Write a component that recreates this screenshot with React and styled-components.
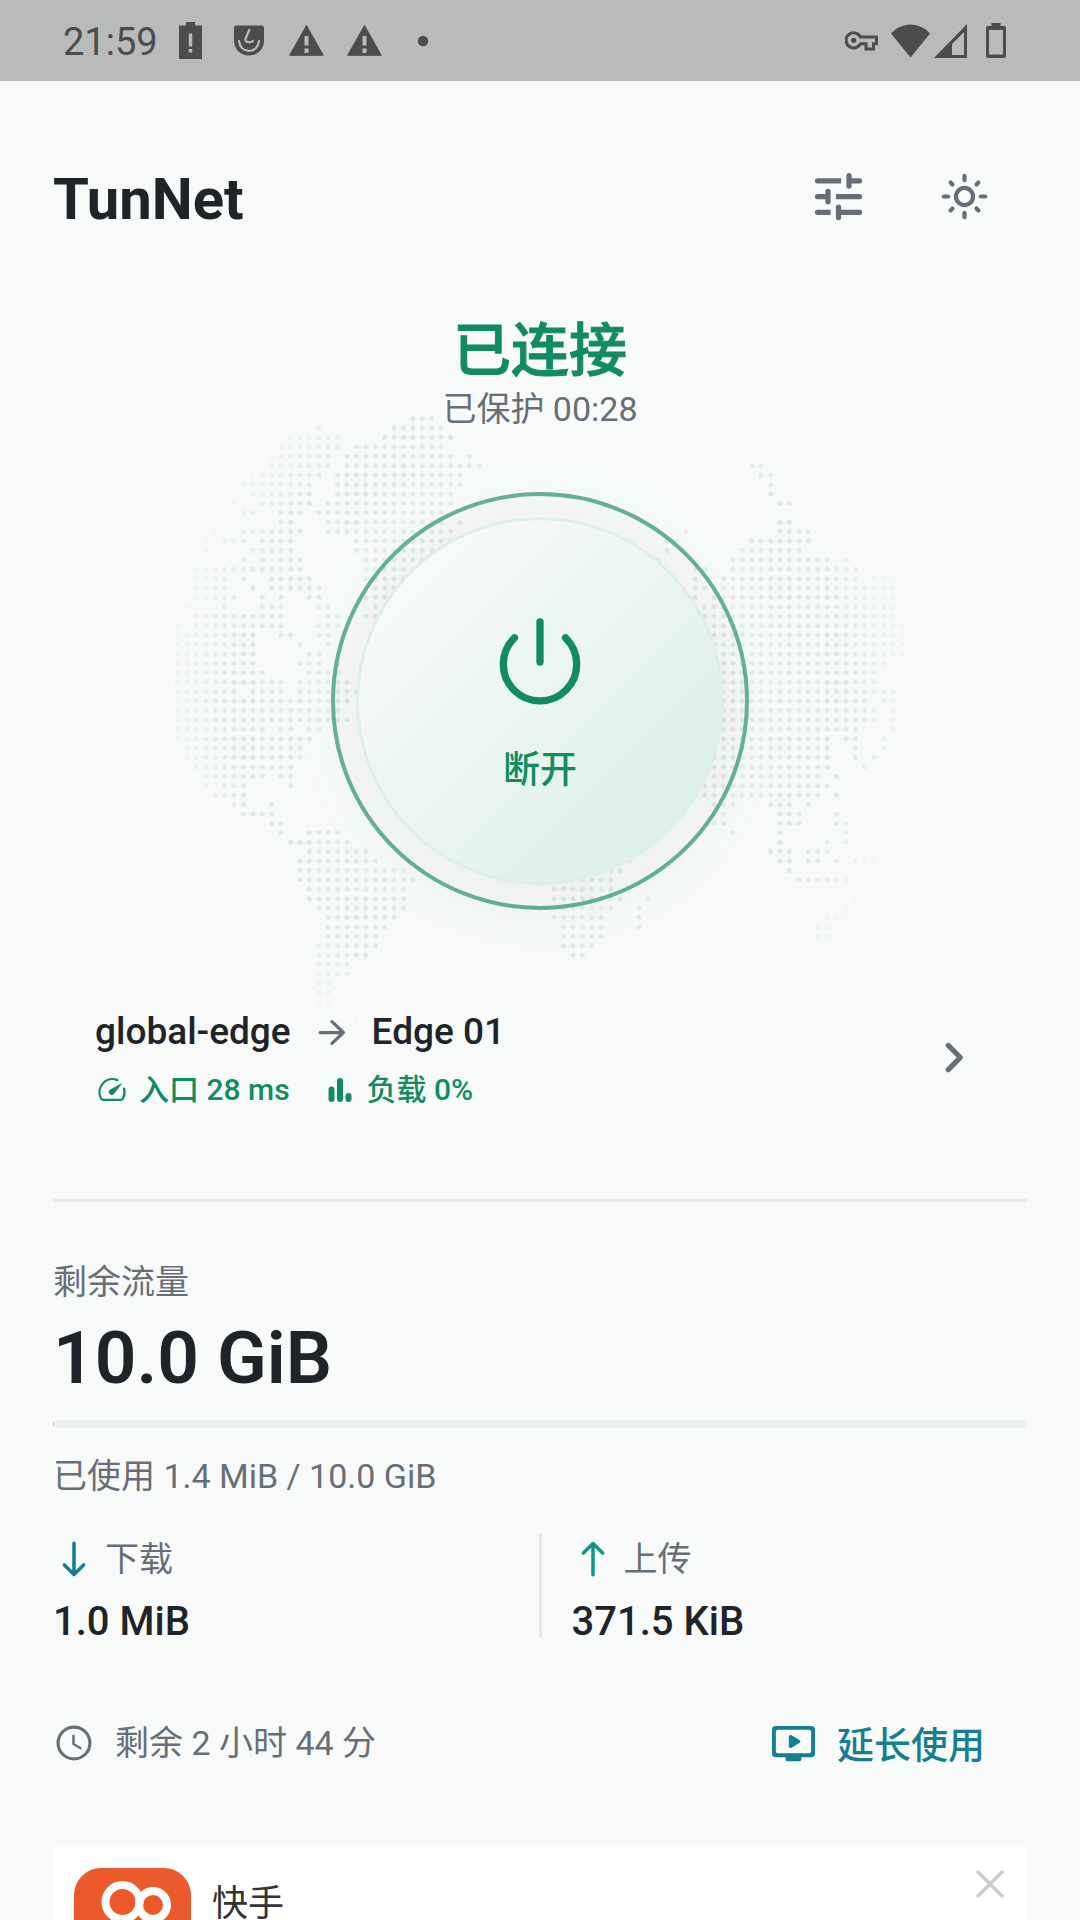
import React from "react";
import styled, { createGlobalStyle, css } from "styled-components";

const color = {
  page: "#f8faf9",
  ink: "#202428",
  muted: "#666e78",
  green: "#118c60",
  teal: "#157f8f",
  upload: "#0f9688",
  rule: "#e6e8ea",
  status: "#b9bbba",
  statusInk: "#4b4d4c",
};

const GlobalStyle = createGlobalStyle`
  *, *::before, *::after { box-sizing: border-box; }
  body {
    margin: 0;
    background: ${color.page};
    color: ${color.ink};
    font-family: Roboto, "Noto Sans CJK SC", sans-serif;
  }
  h1, h2, p, dl, dt, dd { margin: 0; font-weight: inherit; }
`;

const plainButton = css`
  margin: 0;
  padding: 0;
  border: 0;
  background: none;
  color: inherit;
  font: inherit;
  cursor: pointer;
`;

const Screen = styled.div`
  display: flex;
  flex-direction: column;
  height: 100vh;
  overflow: hidden;
`;

const StatusBar = styled.div`
  display: flex;
  flex: none;
  align-items: center;
  justify-content: space-between;
  height: 81px;
  padding: 0 73px 0 63px;
  background: ${color.status};
  color: ${color.statusInk};
`;

const StatusGroup = styled.div`
  display: flex;
  align-items: center;
  gap: ${(p) => p.$gap}px;
`;

const Slot = styled.span`
  display: grid;
  place-items: center;
  width: 42px;
`;

const Clock = styled.time`
  padding-top: 3px;
  font-size: 38px;
  line-height: 44px;
`;

const Icon = styled.svg`
  display: block;
  flex: none;
  width: ${(p) => p.$w}px;
  height: ${(p) => p.$h || p.$w}px;
  color: ${(p) => p.$color || "inherit"};
`;

const Content = styled.main`
  display: flex;
  flex: 1;
  flex-direction: column;
  min-height: 0;
  padding: 52px 53px 0;
`;

const Header = styled.header`
  display: flex;
  flex: none;
  align-items: center;
  justify-content: space-between;
  height: 126px;
`;

const AppName = styled.h1`
  padding-top: 5px;
  font-size: 58px;
  font-weight: 700;
  line-height: 68px;
`;

const Actions = styled.div`
  display: flex;
  color: ${color.muted};
`;

const IconButton = styled.button`
  ${plainButton}
  display: grid;
  place-items: center;
  width: 126px;
  height: 126px;
`;

const Hero = styled.section`
  display: flex;
  flex: none;
  flex-direction: column;
  align-items: center;
  padding-top: 57px;
`;

const State = styled.h2`
  position: relative;
  z-index: 1;
  color: ${color.green};
  font-size: 58px;
  font-weight: 500;
  line-height: 70px;
  -webkit-text-stroke: 1px ${color.green};
`;

const Elapsed = styled.p`
  position: relative;
  z-index: 1;
  color: ${color.muted};
  font-size: 34px;
  line-height: 46px;
`;

const Stage = styled.div`
  position: relative;
  display: grid;
  place-items: center;
  margin-top: 60px;
`;

const WorldMap = styled.svg`
  position: absolute;
  top: 50%;
  left: 50%;
  width: 800px;
  height: 700px;
  transform: translate(-50%, -50%);
  pointer-events: none;
`;

const PowerRing = styled.div`
  position: relative;
  padding: 21px;
  border: 4px solid #64b497;
  border-radius: 50%;
  box-shadow: 0 0 50px 30px rgba(244, 255, 251, 0.3);
`;

const PowerButton = styled.button`
  ${plainButton}
  display: flex;
  flex-direction: column;
  align-items: center;
  width: 368px;
  height: 368px;
  padding-top: 97px;
  border: 3px solid #dcefe8;
  border-radius: 50%;
  background: linear-gradient(135deg, #f8fbfa 10%, #dceee8 92%);
  box-shadow: 0 10px 70px 8px rgba(32, 42, 40, 0.06);
  color: ${color.green};
`;

const PowerLabel = styled.span`
  margin-top: 36px;
  font-size: 37px;
  font-weight: 500;
  line-height: 52px;
`;

const Route = styled.button`
  ${plainButton}
  position: relative;
  display: flex;
  flex: none;
  align-items: center;
  justify-content: space-between;
  margin-top: 72px;
  padding: 23px 42px 89px;
  text-align: left;
`;

const RouteText = styled.span`
  display: flex;
  flex-direction: column;
  gap: 15px;
  padding-top: 4px;
`;

const RoutePath = styled.span`
  display: flex;
  align-items: center;
  gap: 21px;
  font-size: 37px;
  font-weight: 500;
  line-height: 46px;
`;

const RouteStats = styled.span`
  display: flex;
  gap: 33px;
  color: ${color.green};
  font-size: 30px;
  font-weight: 500;
  line-height: 40px;
`;

const Stat = styled.span`
  display: flex;
  align-items: center;
  gap: 10px;
`;

const Rule = styled.hr`
  flex: none;
  width: 100%;
  height: 3px;
  margin: 0;
  border: 0;
  background: ${color.rule};
`;

const Usage = styled.section`
  display: flex;
  flex: none;
  flex-direction: column;
  padding-top: 57px;
`;

const Caption = styled.p`
  color: ${color.muted};
  font-size: 34px;
  line-height: 46px;
`;

const Remaining = styled.p`
  margin: 8px 0 17px;
  font-size: 73px;
  font-weight: 600;
  line-height: 90px;
`;

const Meter = styled.progress`
  display: block;
  width: 100%;
  height: 8px;
  margin-bottom: 25px;
  border: 0;
  border-radius: 4px;
  overflow: hidden;
  appearance: none;
  background: #eceff4;
  &::-webkit-progress-bar { background: #eceff4; }
  &::-webkit-progress-value { background: ${color.teal}; opacity: 0.3; border-radius: 4px; }
`;

const Transfers = styled.dl`
  display: grid;
  grid-template-columns: 1fr 3px 1fr;
  margin-top: 34px;
`;

const Transfer = styled.div`
  padding-left: ${(p) => (p.$second ? 30 : 0)}px;
`;

const TransferLabel = styled.dt`
  display: flex;
  align-items: center;
  gap: 10px;
  color: ${color.muted};
  font-size: 34px;
  line-height: 52px;
`;

const TransferValue = styled.dd`
  padding-top: 14px;
  font-size: 40px;
  font-weight: 500;
  line-height: 46px;
`;

const Separator = styled.div`
  height: 104px;
  background: #e3e6eb;
`;

const Session = styled.section`
  display: flex;
  flex: none;
  align-items: center;
  justify-content: space-between;
  height: 126px;
  margin: 35px 0 41px;
`;

const TimeLeft = styled.p`
  display: flex;
  align-items: center;
  gap: 20px;
  color: ${color.muted};
  font-size: 34px;
  line-height: 46px;
`;

const ExtendButton = styled.button`
  ${plainButton}
  display: flex;
  align-items: center;
  gap: 20px;
  height: 126px;
  padding-right: 42px;
  color: ${color.teal};
  font-size: 37px;
  font-weight: 500;
`;

const Ad = styled.aside`
  display: flex;
  flex: 1;
  align-items: flex-start;
  min-height: 0;
  padding: 21px 23px 0 21px;
  overflow: hidden;
  background: #fff;
`;

const AdName = styled.p`
  flex: 1;
  padding: 20px 0 0 21px;
  color: #333;
  font-size: 36px;
  line-height: 32px;
`;

const CloseButton = styled.button`
  ${plainButton}
  padding-top: 2px;
  color: #ccc;
`;

/* Land dots of the world map: one entry per row, as inclusive column ranges. */
const LAND = `26-28
16 24-29
13-18 23-30
12-18 20-29
11-17 19-30 32
11-17 19-33 62-63
9-16 18-31 63-64
8-15 18-31 64
9-15 18-30 64
7 10-15 17-30 65-66
8-9 12-14 16-29
12-13 17-29 31 65-66
5 8-14 17-30 55 65-68
4 6-8 10-13 20-30 53-54 62-68
4 9-13 20-29 53 61-67
3 8 10 12-14 21-28 52 60-70 72
3-14 21-26 56-57 60-73
3-6 8 11-15 21-25 56 59-73 75-77
3-6 9 11-16 22-24 56-57 59-77
3-7 10 12 15-16 21-23 56 58-77
1-2 6 10-12 16-17 22 57-78
1 3-12 17-18 21-22 57-78
1 3-12 16-18 58-78
0-9 12-13 16-17 58-79
0-9 14 17 58-79
0-9 15-16 59-79
0-9 14-16 18 59-76
-1-10 15-18 59-75
-1-12 14-19 59-75
0-7 9-12 14-20 59-77
0-19 59-74 76-77
1-18 59-75 77
1-19 59-75 77
1-10 12-13 15-16 59-73 77
1-15 59-70 72-73 76
2-14 59-70 73 76
2-14 58-70 73 75
3-13 58-70 74
4-10 12-13 58-69 71
4 6-8 13 57-70
5-8 57-69 71
7-8 11 58-60 64-66 68
8-11 59 65-67 71
11-12 58-59 65-67 71-72
12 15-18 60 65 72
13-19 65 70 72
15-21 64-66 68-70
14-22 49 65-66 68-69 71 73-75
14-25 47-48 66 75-77
14-26 43-47 67-72 76-77
15-25 41-47
15-25 41-48 51 73-75
16-25 41-47 50 72-75
17-24 41-46 50 70-75
17-23 42-46 50 69-74
17-22 42-46 69-73
16-22 42-45 70-73
16-21 43-44 70
16-19
16-19
16-17
16-17
15-17
15-17
15-16 20`;

const PITCH = 9.413;

const DOTS = LAND.split("\n").flatMap((line, row) =>
  line.split(" ").flatMap((range) => {
    const [, from, to] = range.match(/^(-?\d+)(?:-(\d+))?$/);
    const first = Number(from);
    const last = to === undefined ? first : Number(to);
    return Array.from({ length: last - first + 1 }, (_, i) => {
      const dx = first + i - 39.5;
      const dy = row - 30;
      const fade = Math.min(1, Math.max(0, (41 - Math.hypot(dx, dy)) / 8));
      return { x: 400 + dx * PITCH, y: 350 + dy * PITCH, fade };
    });
  })
);

function Dots() {
  return (
    <WorldMap viewBox="0 0 800 700" fill="#e1e8ec" aria-hidden="true">
      {DOTS.map((d, i) => (
        <circle key={i} cx={d.x} cy={d.y} r="2.5" opacity={d.fade} />
      ))}
    </WorldMap>
  );
}

const Warning = () => (
  <Slot>
    <Icon $w={35} $h={31} viewBox="0 0 35 31" aria-hidden="true">
      <path d="M17.5.5 34.3 30.3H.7z" fill="currentColor" stroke="currentColor" strokeLinejoin="round" />
      <path d="M17.5 11v9.5M17.5 23.5v4.5" stroke={color.status} strokeWidth="4" />
    </Icon>
  </Slot>
);

function Status() {
  return (
    <StatusBar>
      <StatusGroup $gap={12}>
        <Clock>21:59</Clock>
        <StatusGroup $gap={16}>
          <Slot>
            <Icon $w={23} $h={37} viewBox="0 0 23 37" aria-hidden="true">
              <path d="M7 0h9v3.500h7V37H0V3.500h7z" fill="currentColor" />
              <path d="M11.500 11.500v13M11.500 27v3.500" stroke={color.status} strokeWidth="3.500" />
            </Icon>
          </Slot>
          <Slot>
            <Icon $w={30} $h={31} viewBox="0 0 30 31" aria-hidden="true">
              <path d="M2.500.500h25q2.500 0 2.500 2.500v12.500C30 24 23.500 30.500 15 30.500S0 24 0 15.500V3Q0 .500 2.500.500z" fill="currentColor" />
              <g fill="none" stroke={color.status} strokeLinecap="round" strokeWidth="2.200">
                <path d="M5 16.200C6 22.500 10 25.800 15 25.800s9-3.300 10-9.600" />
                <path d="M15.400 4.800 11.600 13.500c-.9 2.600.8 3.800 3 3.600 2 0 3.400-.2 4.300-1.200" />
              </g>
            </Icon>
          </Slot>
          <Warning />
          <Warning />
          <Slot>
            <Icon $w={12} viewBox="0 0 12 12" aria-hidden="true">
              <circle cx="6" cy="6" r="5.200" fill="currentColor" />
            </Icon>
          </Slot>
        </StatusGroup>
      </StatusGroup>
      <StatusGroup $gap={4}>
        <Icon $w={42} $h={20} viewBox="0 0 42 20" aria-hidden="true">
          <path d="M15.500 6A7.600 7.600 0 1 0 15.500 12.700H21V18H28.500V12.700H31.500V6z" fill="none" stroke="currentColor" strokeWidth="3" />
          <circle cx="8.700" cy="9.300" r="2.600" fill="currentColor" />
          <path d="M24.700 10v5" stroke={color.status} strokeWidth="3" />
        </Icon>
        <Icon $w={39} $h={34} viewBox="0 0 39 34" aria-hidden="true">
          <path d="M19.500 33.500 0 9.500C5 4 12 .500 19.500.500S34 4 39 9.500z" fill="currentColor" />
        </Icon>
        <Icon $w={33} $h={34} viewBox="0 0 33 34" aria-hidden="true">
          <path d="M33 0v34H0zM30 8 18 20v11h12z" fill="currentColor" fillRule="evenodd" />
        </Icon>
        <Icon $w={36} $h={35} viewBox="-15 0 36 35" aria-hidden="true">
          <path d="M5.500 0h9v3H18q2 0 2 2v28q0 2-2 2H2q-2 0-2-2V5q0-2 2-2h3.500zM3 7v24.500h14V7z" fill="currentColor" fillRule="evenodd" />
        </Icon>
      </StatusGroup>
    </StatusBar>
  );
}

const VerticalArrow = ({ up }) => (
  <Icon $w={42} $color={up ? color.upload : color.teal} viewBox="0 0 24 24" aria-hidden="true">
    <path
      d={up ? "M12 21V3.500M6.500 8.600 12 3.200l5.500 5.400" : "M12 3v17.500M6.500 15.400 12 20.800l5.500-5.400"}
      fill="none"
      stroke="currentColor"
      strokeWidth="2"
      strokeLinecap="round"
      strokeLinejoin="round"
    />
  </Icon>
);

export default function App() {
  return (
    <Screen>
      <GlobalStyle />
      <Status />
      <Content>
        <Header>
          <AppName>TunNet</AppName>
          <Actions>
            <IconButton type="button" aria-label="设置">
              <Icon $w={63} viewBox="0 0 24 24" fill="currentColor" aria-hidden="true">
                <path d="M4 5h9v2H4a1 1 0 0 1 0-2zM16 3a1 1 0 0 1 1 1v1h3a1 1 0 0 1 0 2h-3v1a1 1 0 0 1-2 0V4a1 1 0 0 1 1-1z" />
                <path d="M4 11h3v-1a1 1 0 0 1 2 0v4a1 1 0 0 1-2 0v-1H4a1 1 0 0 1 0-2zM11 11h9a1 1 0 0 1 0 2h-9z" />
                <path d="M4 17h5v2H4a1 1 0 0 1 0-2zM12 15a1 1 0 0 1 1 1v1h7a1 1 0 0 1 0 2h-7v1a1 1 0 0 1-2 0v-4a1 1 0 0 1 1-1z" />
              </Icon>
            </IconButton>
            <IconButton type="button" aria-label="主题">
              <Icon $w={63} viewBox="0 0 24 24" fill="none" stroke="currentColor" strokeWidth="1.6" strokeLinecap="round" aria-hidden="true">
                <circle cx="12" cy="12" r="3.250" />
                <path d="M12 4.100v1.700M12 18.200v1.700M4.100 12h1.700M18.200 12h1.700M6.700 6.700l.7.7M16.600 16.600l.7.7M6.700 17.300l.7-.7M16.600 7.400l.7-.7" />
              </Icon>
            </IconButton>
          </Actions>
        </Header>

        <Hero>
          <State>已连接</State>
          <Elapsed>已保护 00:28</Elapsed>
          <Stage>
            <Dots />
            <PowerRing>
              <PowerButton type="button">
                <Icon $w={92} viewBox="-46 -46 92 92" fill="none" stroke="currentColor" strokeWidth="7.300" strokeLinecap="round" aria-hidden="true">
                  <path d="M-25.500-25.200A36.700 36.700 0 1 0 25.500-25.200M0-41V-1" />
                </Icon>
                <PowerLabel>断开</PowerLabel>
              </PowerButton>
            </PowerRing>
          </Stage>
        </Hero>

        <Route type="button">
          <RouteText>
            <RoutePath>
              <span>global-edge</span>
              <Icon $w={39} $color={color.muted} viewBox="0 0 24 24" fill="none" stroke="currentColor" strokeWidth="2" strokeLinecap="round" strokeLinejoin="round" aria-hidden="true">
                <path d="M5 12h14.300M12.300 5.300 19.300 12l-7 6.700" />
              </Icon>
              <span>Edge 01</span>
            </RoutePath>
            <RouteStats>
              <Stat>
                <Icon $w={34} viewBox="0 0 24 24" fill="none" stroke="currentColor" strokeWidth="1.6" strokeLinecap="round" aria-hidden="true">
                  <path d="M15.800 5A9.200 9.200 0 0 0 4.200 17.800q.5 1.200 1.700 1.200h12.200q1.200 0 1.700-1.200A9.200 9.200 0 0 0 20.500 11" />
                  <path d="M19.500 6.800 10.400 11.900a2.100 2.100 0 1 0 3 3z" fill="currentColor" stroke="none" />
                </Icon>
                <span>入口 28 ms</span>
              </Stat>
              <Stat>
                <Icon $w={34} viewBox="0 0 34 34" stroke="currentColor" strokeWidth="6" strokeLinecap="round" aria-hidden="true">
                  <path d="M8.500 16.500v9.500M17 8v18M25.500 23v3" />
                </Icon>
                <span>负载 0%</span>
              </Stat>
            </RouteStats>
          </RouteText>
          <Icon $w={63} $color={color.muted} viewBox="0 0 24 24" fill="none" stroke="currentColor" strokeWidth="2" strokeLinecap="round" strokeLinejoin="round" aria-hidden="true">
            <path d="M10 7.400l4.600 4.600L10 16.600" />
          </Icon>
        </Route>

        <Rule />

        <Usage>
          <Caption>剩余流量</Caption>
          <Remaining>10.0 GiB</Remaining>
          <Meter value={0.0014} max={10} aria-label="已使用流量" />
          <Caption>已使用 1.4 MiB / 10.0 GiB</Caption>
          <Transfers>
            <Transfer>
              <TransferLabel>
                <VerticalArrow />
                下载
              </TransferLabel>
              <TransferValue>1.0 MiB</TransferValue>
            </Transfer>
            <Separator />
            <Transfer $second>
              <TransferLabel>
                <VerticalArrow up />
                上传
              </TransferLabel>
              <TransferValue>371.5 KiB</TransferValue>
            </Transfer>
          </Transfers>
        </Usage>

        <Session>
          <TimeLeft>
            <Icon $w={42} viewBox="0 0 24 24" fill="none" stroke="currentColor" strokeLinecap="round" strokeLinejoin="round" aria-hidden="true">
              <circle cx="12" cy="12" r="9.100" strokeWidth="1.800" />
              <path d="M11.700 7.800v4.800l4 2.400" strokeWidth="1.400" />
            </Icon>
            剩余 2 小时 44 分
          </TimeLeft>
          <ExtendButton type="button">
            <Icon $w={47} viewBox="0 0 24 24" fill="currentColor" aria-hidden="true">
              <path d="M3 3h18a2 2 0 0 1 2 2v12a2 2 0 0 1-2 2h-5v1a1 1 0 0 1-1 1H9a1 1 0 0 1-1-1v-1H3a2 2 0 0 1-2-2V5a2 2 0 0 1 2-2zm1 2a1 1 0 0 0-1 1v10a1 1 0 0 0 1 1h16a1 1 0 0 0 1-1V6a1 1 0 0 0-1-1z" fillRule="evenodd" />
              <path d="M9.600 8.600v4.800c0 .8.800 1.200 1.400.8l4-2.400q1-.8 0-1.600l-4-2.400c-.6-.4-1.400 0-1.400.8z" />
            </Icon>
            延长使用
          </ExtendButton>
        </Session>

        <Ad>
          <Icon $w={117} viewBox="0 0 117 117" aria-hidden="true">
            <rect width="117" height="117" rx="27" fill="#ec5a2b" />
            <g fill="none" stroke="#fff" strokeWidth="8">
              <circle cx="48.500" cy="34" r="17" />
              <circle cx="79" cy="37" r="14" />
              <rect x="40" y="62" width="52" height="36" rx="10" />
            </g>
          </Icon>
          <AdName>快手</AdName>
          <CloseButton type="button" aria-label="关闭">
            <Icon $w={28} viewBox="0 0 28 28" stroke="currentColor" strokeWidth="3.500" strokeLinecap="round" aria-hidden="true">
              <path d="M2 2l24 24M26 2 2 26" />
            </Icon>
          </CloseButton>
        </Ad>
      </Content>
    </Screen>
  );
}
